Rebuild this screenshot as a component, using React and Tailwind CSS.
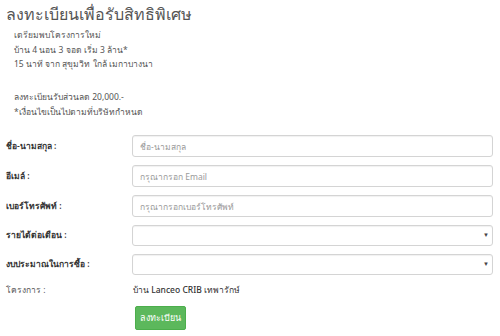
import React from "react";

const fields = [
  { label: "ชื่อ-นามสกุล :", placeholder: "ชื่อ-นามสกุล" },
  { label: "อีเมล์ :", placeholder: "กรุณากรอก Email" },
  { label: "เบอร์โทรศัพท์ :", placeholder: "กรุณากรอกเบอร์โทรศัพท์" },
];

const selects = ["รายได้ต่อเดือน :", "งบประมาณในการซื้อ :"];

function Row({ label, children, className = "" }) {
  return (
    <div className={`flex items-center ${className}`}>
      <div className="w-[132px] shrink-0 pl-[6px] text-[8.5px] font-semibold text-[#333]">{label}</div>
      {children}
    </div>
  );
}

export default function App() {
  return (
    <div className="h-[336px] w-[500px] overflow-hidden bg-white font-['Noto_Sans',sans-serif] text-[#444]">
      <h2 className="m-0 pl-[6px] pt-[3px] text-[16px] leading-[22px] font-normal text-[#555]">
        ลงทะเบียนเพื่อรับสิทธิพิเศษ
      </h2>
      <div className="mt-[3px] pl-[14px] text-[8.5px] leading-[14.5px] text-[#555]">
        <p className="m-0">เตรียมพบโครงการใหม่</p>
        <p className="m-0">บ้าน 4 นอน 3 จอด เริ่ม 3 ล้าน*</p>
        <p className="m-0">15 นาที จาก สุขุมวิท ใกล้ เมกาบางนา</p>
        <p className="m-0 mt-[18.5px]">ลงทะเบียนรับส่วนลด 20,000.-</p>
        <p className="m-0">*เงื่อนไขเป็นไปตามที่บริษัทกำหนด</p>
      </div>

      <div className="mt-[16px]">
        {fields.map((f) => (
          <Row key={f.label} label={f.label} className="mb-[8px]">
            <input
              placeholder={f.placeholder}
              className="h-[22px] w-[361px] rounded-[3px] border border-[#d4d4d4] bg-white px-[7px] text-[8.5px] text-[#555] shadow-[inset_0_1px_1px_rgba(0,0,0,0.06)] outline-none placeholder:text-[#9a9a9a]"
            />
          </Row>
        ))}
        {selects.map((s, i) => (
          <Row key={s} label={s} className={i === 0 ? "mb-[8px]" : ""}>
            <div className="relative h-[21px] w-[361px] rounded-[3px] border border-[#d4d4d4] bg-white shadow-[inset_0_1px_1px_rgba(0,0,0,0.06)]">
              <span className="absolute right-[3px] top-[6px] text-[6px] leading-none text-[#444]">▼</span>
            </div>
          </Row>
        ))}
        <div className="mt-[9px] flex items-center">
          <div className="w-[133px] shrink-0 pl-[6px] text-[8.5px] text-[#555]">โครงการ :</div>
          <div className="text-[8.5px] font-medium text-[#333]">บ้าน Lanceo CRIB เทพารักษ์</div>
        </div>
        <div className="mt-[9px] pl-[135px]">
          <button
            type="button"
            className="flex h-[24px] w-[51px] items-center justify-center rounded-[2px] border border-[#4cae4c] bg-[#5cb85c] text-[9px] text-white"
          >
            ลงทะเบียน
          </button>
        </div>
      </div>
    </div>
  );
}
